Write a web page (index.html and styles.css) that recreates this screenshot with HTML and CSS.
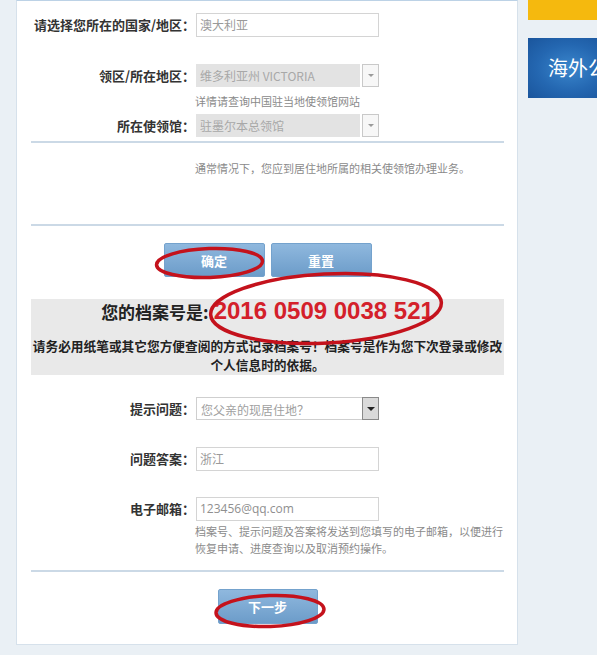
FILE: index.html
```html
<!DOCTYPE html>
<html lang="zh-CN">
<head>
<meta charset="utf-8">
<title>档案号</title>
<link rel="stylesheet" href="styles.css">
</head>
<body>
<div class="page">
  <main class="panel">
    <div class="row r1">
      <label class="lbl">请选择您所在的国家/地区<span class="colon">：</span></label>
      <div class="field">澳大利亚</div>
    </div>
    <div class="row r2">
      <label class="lbl">领区/所在地区<span class="colon">：</span></label>
      <div class="select disabled"><span class="sel-text">维多利亚州 VICTORIA</span><span class="sel-btn"></span></div>
    </div>
    <p class="hint h-under">详情请查询中国驻当地使领馆网站</p>
    <div class="row r3">
      <label class="lbl">所在使领馆<span class="colon">：</span></label>
      <div class="select disabled"><span class="sel-text">驻墨尔本总领馆</span><span class="sel-btn"></span></div>
    </div>
    <hr class="divider d1">
    <p class="hint notice">通常情况下，您应到居住地所属的相关使领馆办理业务。</p>
    <hr class="divider d2">
    <div class="btns">
      <button class="btn">确定</button>
      <button class="btn">重置</button>
    </div>
    <section class="record">
      <h2 class="record-title">您的档案号是:<span class="num">2016 0509 0038 521</span></h2>
      <p class="record-note">请务必用纸笔或其它您方便查阅的方式记录档案号！档案号是作为您下次登录或修改<br>个人信息时的依据。</p>
    </section>
    <div class="row r4">
      <label class="lbl">提示问题<span class="colon">：</span></label>
      <div class="select active"><span class="sel-text">您父亲的现居住地？</span><span class="sel-btn"></span></div>
    </div>
    <div class="row r5">
      <label class="lbl">问题答案<span class="colon">：</span></label>
      <div class="field">浙江</div>
    </div>
    <div class="row r6">
      <label class="lbl">电子邮箱<span class="colon">：</span></label>
      <div class="field latin">123456@qq.com</div>
    </div>
    <p class="hint mail-hint">档案号、提示问题及答案将发送到您填写的电子邮箱，以便进行<br>恢复申请、进度查询以及取消预约操作。</p>
    <hr class="divider d3">
    <div class="btns next">
      <button class="btn">下一步</button>
    </div>
  </main>
  <aside class="side">
    <div class="side-yellow"></div>
    <div class="side-banner">海外公民服务</div>
  </aside>
  <svg class="marks" width="597" height="655" viewBox="0 0 597 655">
    <ellipse cx="209.5" cy="263" rx="53" ry="14.5" transform="rotate(-2 209.5 263)"/>
    <ellipse cx="326" cy="308.5" rx="115.5" ry="34.5" transform="rotate(-3 326 308.5)"/>
    <ellipse cx="270" cy="611" rx="54" ry="15.5" transform="rotate(-2 270 611)"/>
  </svg>
</div>
</body>
</html>
```

FILE: styles.css
```css
* { box-sizing: border-box; }

html, body {
  margin: 0;
  padding: 0;
}

body {
  background: #e9eff5;
  font-family: "Noto Sans CJK SC", "Noto Sans", sans-serif;
  color: #333;
}

.page {
  position: relative;
  display: flex;
  align-items: flex-start;
  width: 597px;
  height: 655px;
  overflow: hidden;
  padding-left: 16px;
  background: #eaf0f5;
}

.panel {
  width: 502px;
  flex: none;
  background: #fff;
  border: 1px solid #d6e1eb;
  border-top-color: #bcd2e6;
  padding: 12px 13px 20px 14px;
}

.row {
  display: grid;
  grid-template-columns: 165px 183px;
  align-items: center;
}

.lbl {
  font-size: 13px;
  font-weight: bold;
  color: #333;
  text-align: right;
  padding-right: 1px;
  line-height: 16px;
  white-space: nowrap;
}

.colon {
  font-family: "Noto Sans CJK TC", "Noto Sans CJK SC", sans-serif;
}

.field {
  height: 24px;
  border: 1px solid #d4d4d4;
  font-size: 12px;
  line-height: 22px;
  color: #9a9a9a;
  padding-left: 3px;
}

.field.latin {
  font-family: "Open Sans", "Noto Sans", sans-serif;
  color: #8f8f8f;
}

.select {
  display: flex;
  height: 23px;
  font-size: 12px;
  line-height: 23px;
  color: #a8a8a8;
}

.sel-text {
  flex: 1;
  padding-left: 4px;
  white-space: nowrap;
  overflow: hidden;
}

.sel-btn {
  position: relative;
  width: 17px;
  flex: none;
  border: 1px solid #c9c9c9;
  background: #f7f7f7;
}

.sel-btn::after {
  content: "";
  position: absolute;
  left: 5px;
  top: 9px;
  border-left: 3px solid transparent;
  border-right: 3px solid transparent;
  border-top: 3px solid #9a9a9a;
}

.select.disabled .sel-text {
  background: #e3e3e3;
  margin-right: 2px;
}

.select.active {
  border: 1px solid #cfcfcf;
  color: #a0a0a0;
}

.select.active .sel-btn {
  border: 1px solid #8a8a8a;
  background: #dadada;
  margin: -1px -1px -1px 0;
}

.select.active .sel-btn::after {
  border-top-color: #222;
  border-left-width: 4px;
  border-right-width: 4px;
  border-top-width: 4px;
  left: 4px;
}

.hint {
  margin: 0 0 0 164px;
  font-size: 11px;
  line-height: 14px;
  color: #8a8a8a;
  white-space: nowrap;
}

.r2 { margin-top: 27px; }
.h-under { margin-top: 7px; }
.r3 { margin-top: 6px; }

.divider {
  margin: 0;
  height: 0;
  border: 0;
  border-top: 2px solid #cbd9e6;
}

.d1 { margin-top: 4px; }

.notice {
  margin-top: 17px;
  line-height: 16px;
}

.d2 { margin-top: 48px; }

.btns {
  display: flex;
  justify-content: center;
  gap: 6px;
  margin-top: 17px;
}

.btn {
  width: 101px;
  height: 34px;
  border: 1px solid #74a2cd;
  border-radius: 2px;
  background: linear-gradient(#8fb8de, #6c9cc9);
  color: #fff;
  font-family: "Noto Sans CJK SC", sans-serif;
  font-size: 13px;
  font-weight: bold;
  padding: 0;
}

.record {
  margin-top: 22px;
  background: #e9e9e9;
  height: 76px;
  text-align: center;
}

.record-title {
  margin: 0;
  font-size: 17px;
  line-height: 24px;
  font-weight: bold;
  color: #222;
}

.num {
  margin-left: 5px;
  font-family: "Liberation Sans", Arial, sans-serif;
  font-size: 24px;
  font-weight: bold;
  color: #d4202a;
}

.record-note {
  margin: 12px 0 0;
  font-size: 12.7px;
  line-height: 19px;
  font-weight: bold;
  color: #222;
  white-space: nowrap;
}

.r4 { margin-top: 22px; }
.r5 { margin-top: 27px; }
.r6 { margin-top: 26px; }

.mail-hint {
  margin-top: 2px;
  line-height: 17px;
}

.d3 { margin-top: 13px; }

.next { margin-top: 17px; }
.next .btn { width: 100px; height: 35px; }

.side {
  margin-left: 10px;
  width: 69px;
  flex: none;
}

.side-yellow {
  height: 20px;
  background: #f5b90e;
}

.side-banner {
  margin-top: 18px;
  height: 60px;
  background: radial-gradient(ellipse at 60% 50%, #3a86cc 0%, #2467b1 55%, #1a559c 100%);
  color: #fff;
  font-size: 20px;
  line-height: 60px;
  padding-left: 20px;
  white-space: nowrap;
  overflow: hidden;
}

.marks {
  position: absolute;
  left: 0;
  top: 0;
  pointer-events: none;
}

.marks ellipse {
  fill: none;
  stroke: #c4121c;
  stroke-width: 3.5;
}
```
